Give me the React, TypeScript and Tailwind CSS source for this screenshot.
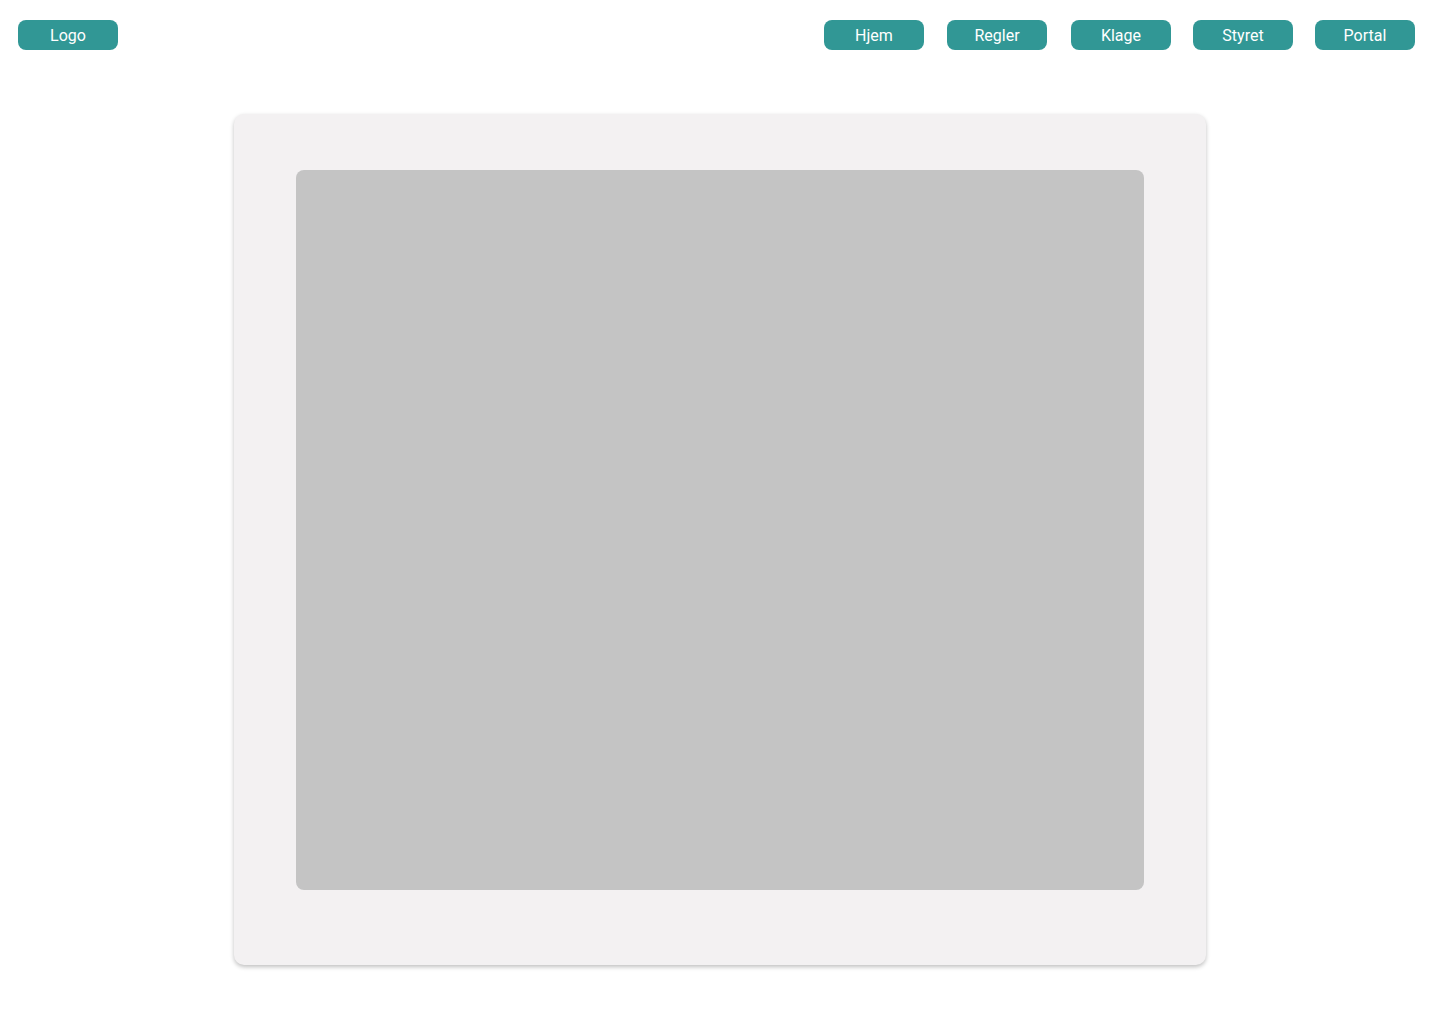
import React from "react";

const NavButton = ({ label, className = "" }: { label: string; className?: string }) => (
  <button
    className={`w-[100px] h-[30px] rounded-[8px] bg-[#319795] text-white text-[16px] leading-[20px] pt-[2px] flex items-center justify-center ${className}`}
  >
    {label}
  </button>
);

export default function App() {
  return (
    <div className="min-h-[1024px] w-full bg-white" style={{ fontFamily: "Roboto, 'Noto Sans', sans-serif" }}>
      <header className="flex items-center justify-between pt-[20px] pl-[18px] pr-[25px]">
        <NavButton label="Logo" />
        <nav className="flex">
          <NavButton label="Hjem" />
          <NavButton label="Regler" className="ml-[23px]" />
          <NavButton label="Klage" className="ml-[24px]" />
          <NavButton label="Styret" className="ml-[22px]" />
          <NavButton label="Portal" className="ml-[22px]" />
        </nav>
      </header>
      <main className="flex justify-center mt-[64px]">
        <div className="w-[972px] h-[851px] rounded-[10px] bg-[#f3f1f2] shadow-[0_2px_4px_rgba(0,0,0,0.25)] pt-[56px] pl-[62px]">
          <div className="w-[848px] h-[720px] rounded-[8px] bg-[#c4c4c4]" />
        </div>
      </main>
    </div>
  );
}
